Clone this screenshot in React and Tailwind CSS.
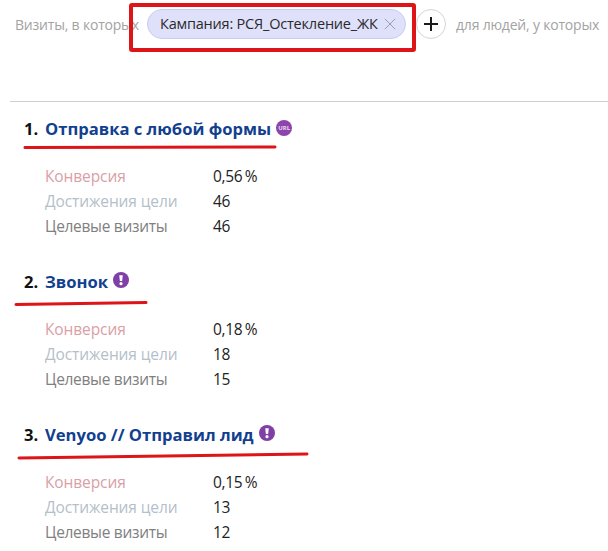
import React from 'react';

const goals = [
  { n: 1, title: 'Отправка с любой формы', badge: 'url', conv: '0,56', reach: 46, visits: 46 },
  { n: 2, title: 'Звонок', badge: 'warn', conv: '0,18', reach: 18, visits: 15 },
  { n: 3, title: 'Venyoo // Отправил лид', badge: 'warn', conv: '0,15', reach: 13, visits: 12 },
];

function Badge({ type }) {
  if (type === 'url') {
    return (
      <span className="ml-[5px] mb-[3px] flex h-4 w-4 items-center justify-center rounded-full bg-[#8e44ad] text-[6px] font-bold leading-none text-[#e9dcf2]">
        URL
      </span>
    );
  }
  return (
    <svg className="ml-[5px] mb-[5px]" width="16" height="16" viewBox="0 0 17 17">
      <circle cx="8.5" cy="8.5" r="8.5" fill="#7f3fa6" />
      <path d="M6.6 3.4h3.8l-.7 6.2H7.3z" fill="#fff" />
      <circle cx="8.5" cy="12.4" r="1.7" fill="#fff" />
    </svg>
  );
}

function Goal({ goal }) {
  return (
    <div className="h-[153px] pl-6 pt-[15px]">
      <div className="flex h-6 items-center text-[16.6px] font-bold">
        <span className="w-[21px] text-[#111]">{goal.n}.</span>
        <span className="text-[#12408f]">{goal.title}</span>
        <Badge type={goal.badge} />
      </div>
      <div className="mt-[23px] grid grid-cols-[168px_auto] pl-[21px] text-[15.5px] leading-[25px] tracking-[-0.3px]">
        <span className="tracking-[-0.1px] text-[#d9a0a6]">Конверсия</span>
        <span className="text-[#222]">{goal.conv}{'\u2009'}%</span>
        <span className="tracking-[-0.1px] text-[#b4c0c9]">Достижения цели</span>
        <span className="text-[#222]">{goal.reach}</span>
        <span className="text-[#808080]">Целевые визиты</span>
        <span className="text-[#222]">{goal.visits}</span>
      </div>
    </div>
  );
}

export default function App() {
  return (
    <div className="relative h-[551px] w-[608px] overflow-hidden bg-white font-['Open_Sans',sans-serif]">
      <div className="flex h-[48px] items-center pl-[15px] text-[14px] tracking-[-0.2px] text-[#a3a3a3]">
        <span className="w-[132px] whitespace-nowrap">Визиты, в которых</span>
        <div className="flex h-[30px] w-[259px] items-center justify-between rounded-full border border-[#c9cdf0] bg-[#dfe1fb] pl-[12px] pr-[9px] text-[14.5px] tracking-[-0.2px] text-[#2a2a2a]">
          <span className="whitespace-nowrap">Кампания: РСЯ_Остекление_ЖК</span>
          <svg width="12" height="12" viewBox="0 0 12 12" fill="none" stroke="#9a9caa" strokeWidth="1">
            <path d="M.8.8l10.4 10.4M11.2.8L.8 11.2" />
          </svg>
        </div>
        <div className="ml-[10px] flex h-[30px] w-[30px] items-center justify-center rounded-full border border-[#d4d4d4]">
          <svg width="14" height="14" viewBox="0 0 14 14" stroke="#1a1a1a" strokeWidth="2">
            <path d="M7 0v14M0 7h14" />
          </svg>
        </div>
        <span className="ml-[10px] whitespace-nowrap">для людей, у которых</span>
      </div>

      <div className="ml-[10px] mt-[53px] h-px bg-[#cfcfcf]" />

      {goals.map((g) => (
        <Goal key={g.n} goal={g} />
      ))}

      {/* красные пометки поверх скриншота */}
      <svg className="absolute left-0 top-0" width="608" height="551" fill="none" stroke="#dd1518">
        <rect x="131" y="5" width="283" height="45" rx="1" strokeWidth="4" />
        <path d="M25 147.5L275 147" strokeWidth="3" strokeLinecap="round" />
        <path d="M16 304.5L146 302.5" strokeWidth="3" strokeLinecap="round" />
        <path d="M19 458L307 454" strokeWidth="3" strokeLinecap="round" />
      </svg>
    </div>
  );
}
